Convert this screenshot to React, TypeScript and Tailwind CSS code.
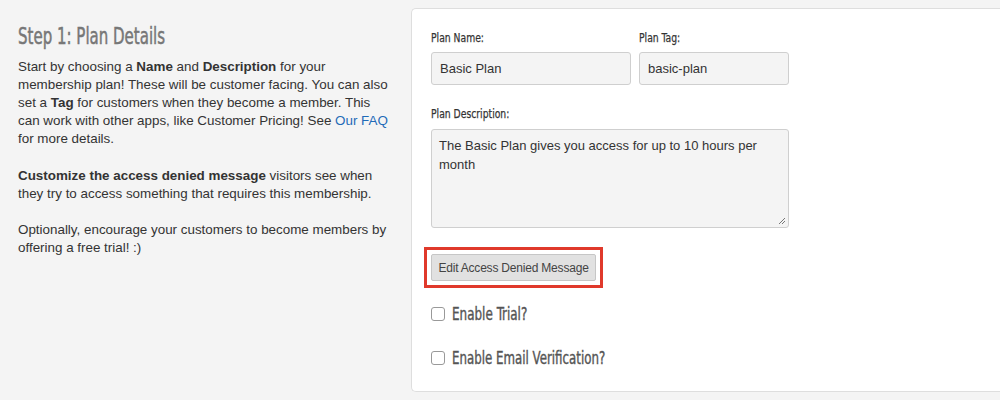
import React from "react";

const narrow = { fontFamily: '"DejaVu Sans Condensed", "Liberation Sans", sans-serif' };

export default function App() {
  return (
    <div className="w-[1000px] h-[400px] bg-[#f4f4f4] flex overflow-hidden" style={{ fontFamily: '"Liberation Sans", Arial, sans-serif' }}>
      <div className="w-[411px] shrink-0 pl-[18px] pr-[22px] pt-[22px] text-[13.4px] leading-[18px] text-[#333]">
        <h2 className="text-[23.5px] leading-[28px] text-[#777] mb-[8px] whitespace-nowrap [-webkit-text-stroke:0.5px_#777]">
          <span className="inline-block origin-left scale-x-[0.71]" style={narrow}>Step 1: Plan Details</span>
        </h2>
        <p className="mb-[19px]">
          Start by choosing a <b>Name</b> and <b>Description</b> for your membership plan! These will be customer facing. You can also set a <b>Tag</b> for customers when they become a member. This can work with other apps, like Customer Pricing! See <a className="text-[#1f6bb8]">Our FAQ</a> for more details.
        </p>
        <p className="mb-[18px]">
          <b>Customize the access denied message</b> visitors see when they try to access something that requires this membership.
        </p>
        <p>Optionally, encourage your customers to become members by offering a free trial! :)</p>
      </div>
      <div className="mt-[8px] h-[384px] flex-1 bg-white border border-[#dedede] rounded-l-[5px] border-r-0 pl-[19px] pt-[21px]">
        <div className="flex gap-[8px]">
          <div className="w-[200px]">
            <div className="text-[13px] leading-[16px] text-[#333] mb-[6px] whitespace-nowrap [-webkit-text-stroke:0.25px_#333]">
              <span className="inline-block origin-left scale-x-[0.79]" style={narrow}>Plan Name:</span>
            </div>
            <div className="h-[33px] border border-[#cfcfcf] rounded-[3px] bg-[#f4f4f4] px-[8px] flex items-center text-[13px] text-[#333]">Basic Plan</div>
          </div>
          <div className="w-[150px]">
            <div className="text-[13px] leading-[16px] text-[#333] mb-[6px] whitespace-nowrap [-webkit-text-stroke:0.25px_#333]">
              <span className="inline-block origin-left scale-x-[0.79]" style={narrow}>Plan Tag:</span>
            </div>
            <div className="h-[33px] border border-[#cfcfcf] rounded-[3px] bg-[#f4f4f4] px-[8px] flex items-center text-[13px] text-[#333]">basic-plan</div>
          </div>
        </div>
        <div className="mt-[21px] text-[13px] leading-[16px] text-[#333] mb-[7px] whitespace-nowrap [-webkit-text-stroke:0.25px_#333]">
          <span className="inline-block origin-left scale-x-[0.79]" style={narrow}>Plan Description:</span>
        </div>
        <div className="relative w-[358px] h-[99px] border border-[#cfcfcf] rounded-[3px] bg-[#f4f4f4] px-[7px] pt-[6px] text-[13px] leading-[19px] text-[#333]">
          The Basic Plan gives you access for up to 10 hours per month
          <svg className="absolute right-[2px] bottom-[2px]" width="8" height="8" viewBox="0 0 8 8">
            <path d="M7 1 L1 7 M7 4 L4 7" stroke="#777" strokeWidth="1" />
          </svg>
        </div>
        <div className="mt-[19px] ml-[-7px] w-[179px] h-[41px] border-[3px] border-[#e0392b] p-[4px]">
          <div className="h-[27px] w-[165px] bg-[#e1e1e1] border border-[#c6c6c6] rounded-[2px] flex items-center justify-center text-[12px] text-[#444] tracking-[-0.2px]">Edit Access Denied Message</div>
        </div>
        <div className="mt-[19px] flex items-center h-[13px]">
          <span className="w-[14px] h-[14px] border border-[#999] rounded-[3px] bg-white shrink-0" />
          <span className="ml-[7px] text-[18px] text-[#555] whitespace-nowrap [-webkit-text-stroke:0.4px_#555]">
            <span className="inline-block origin-left scale-x-[0.74]" style={narrow}>Enable Trial?</span>
          </span>
        </div>
        <div className="mt-[31px] flex items-center h-[13px]">
          <span className="w-[14px] h-[14px] border border-[#999] rounded-[3px] bg-white shrink-0" />
          <span className="ml-[7px] text-[18px] text-[#555] whitespace-nowrap [-webkit-text-stroke:0.4px_#555]">
            <span className="inline-block origin-left scale-x-[0.73]" style={narrow}>Enable Email Verification?</span>
          </span>
        </div>
      </div>
    </div>
  );
}
